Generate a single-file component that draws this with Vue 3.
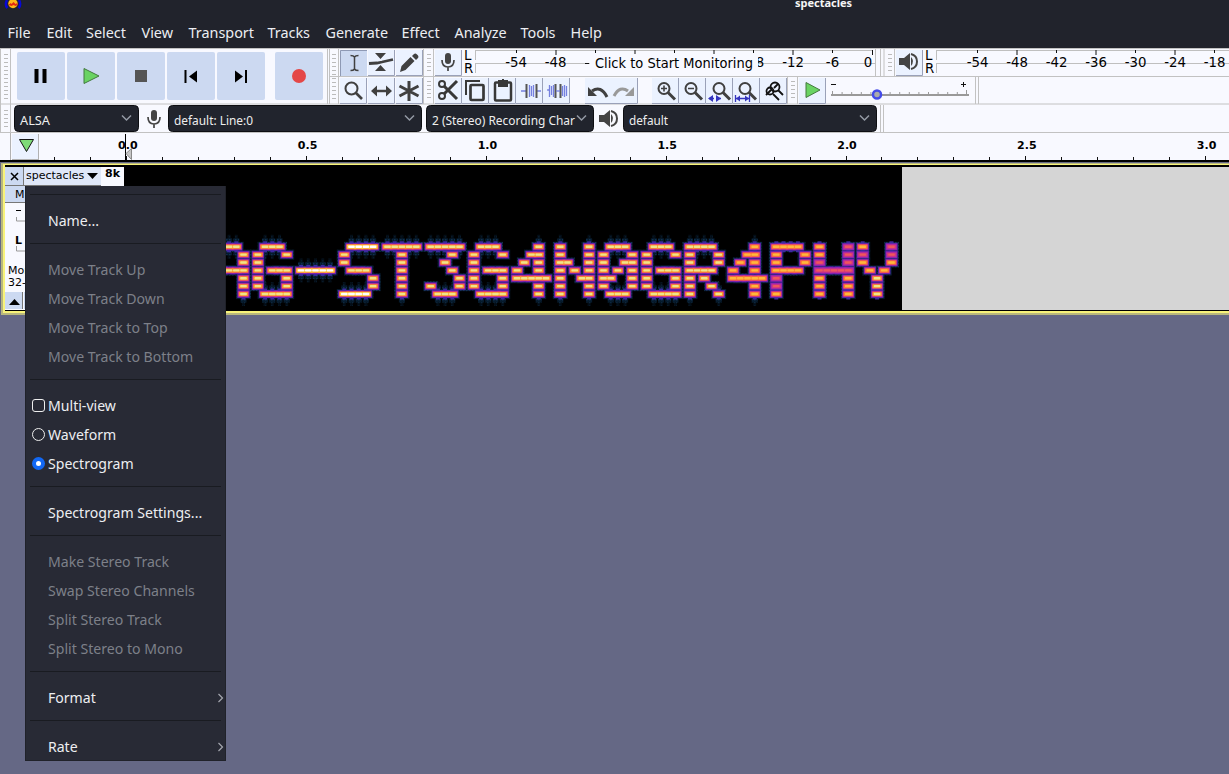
<script setup>
const menus = [['File', 7.5], ['Edit', 46.5], ['Select', 86], ['View', 141.5], ['Transport', 188.5], ['Tracks', 267.5], ['Generate', 325.5], ['Effect', 401.5], ['Analyze', 454.5], ['Tools', 520.5], ['Help', 570.5]]
const glyphs = {
  A: ['.###.', '#...#', '#...#', '#####', '#...#', '#...#', '#...#'],
  G: ['.###.', '#...#', '#....', '#.###', '#...#', '#...#', '.####'],
  '-': ['.....', '.....', '.....', '#####', '.....', '.....', '.....'],
  S: ['.####', '#....', '#....', '.###.', '....#', '....#', '####.'],
  T: ['#####', '..#..', '..#..', '..#..', '..#..', '..#..', '..#..'],
  3: ['#####', '...#.', '..#..', '...#.', '....#', '#...#', '.###.'],
  4: ['...#.', '..##.', '.#.#.', '#..#.', '#####', '...#.', '...#.'],
  N: ['#...#', '#...#', '##..#', '#.#.#', '#..##', '#...#', '#...#'],
  0: ['.###.', '#...#', '#..##', '#.#.#', '##..#', '#...#', '.###.'],
  R: ['####.', '#...#', '#...#', '####.', '#.#..', '#..#.', '#...#'],
  P: ['####.', '#...#', '#...#', '####.', '#....', '#....', '#....'],
  H: ['#...#', '#...#', '#...#', '#####', '#...#', '#...#', '#...#'],
  Y: ['#...#', '#...#', '#...#', '.#.#.', '..#..', '..#..', '..#..']
}
const cells = []
;[...'AG-ST3G4N0GR4PHY'].forEach((ch, k) => {
  glyphs[ch].forEach((row, r) => {
    [...row].forEach((v, c) => {
      if (v !== '#') return
      let tone = 'mid'
      if (ch === '-' || (ch === 'S' && (r === 0 || r === 6))) tone = 'hot'
      else if (k >= 12) tone = 'warm'
      if (k === 13 && (r === 4 || r === 5)) tone = 'cool'
      if (k === 14 && (r === 2 || r === 3 || (c === 4 && r < 2))) tone = 'cool'
      if (k === 15 && ((c === 0 && r === 1) || (c === 4 && r < 2))) tone = 'cool'
      if (k === 15 && r > 3) tone = 'mid'
      cells.push({ x: 214.7 + 43.2 * k + 7.2 * c - 124, y: 246.8 + 7.87 * r - 167, tone, edge: r === 0 || r === 6 || ch === '-', soft: k > 12 })
    })
  })
})
const items = [
  { sep: 1 }, { t: 'Name...' }, { sep: 1 },
  { t: 'Move Track Up', off: 1 }, { t: 'Move Track Down', off: 1 }, { t: 'Move Track to Top', off: 1 }, { t: 'Move Track to Bottom', off: 1 }, { sep: 1 },
  { t: 'Multi-view', mark: 'box' }, { t: 'Waveform', mark: 'radio' }, { t: 'Spectrogram', mark: 'radio on' }, { sep: 1 },
  { t: 'Spectrogram Settings...' }, { sep: 1 },
  { t: 'Make Stereo Track', off: 1 }, { t: 'Swap Stereo Channels', off: 1 }, { t: 'Split Stereo Track', off: 1 }, { t: 'Split Stereo to Mono', off: 1 }, { sep: 1 },
  { t: 'Format', sub: 1 }, { sep: 1 }, { t: 'Rate', sub: 1 }
]
const recTicks = [[516, '-54'], [555.5, '-48'], [760, '8'], [793, '-12'], [832.5, '-6'], [868, '0']]
const playTicks = [-54, -48, -42, -36, -30, -24, -18].map((v, i) => [977.5 + i * 39.5, v])
const rulerTicks = Array.from({ length: 33 }, (_, i) => ({ x: 54.4 + i * 35.96, major: (i - 2) % 5 === 0, label: ((i - 2) / 10).toFixed(1) }))
</script>

<template>
  <div class="app">
    <header class="title">
      <svg class="logo" width="20" height="12"><path d="M4 0Q1.500 5 4.500 8M16 0q2.500 5-.5 8" stroke="#0808d8" stroke-width="2.500" fill="none" /><circle cx="10" cy="3.500" r="4.700" fill="#ffb719" /><path d="M5.500 5l2-2 1 1 2-2 2 2 2-1v2l-2 1-2-1-2 1z" fill="#e22a13" /></svg>
      <span>spectacles</span>
    </header>
    <nav class="menubar">
      <svg width="620" height="32"><text v-for="m in menus" :key="m[0]" :x="m[1]" y="22">{{ m[0] }}</text></svg>
    </nav>

    <svg class="bars" width="1229" height="85" viewBox="0 48 1229 85">
      <rect y="48" width="1229" height="85" fill="#f8f9ff" />
      <g stroke="#c2c2c2" fill="none">
        <path d="M0 48.500H1229M330 76.500H1229M0 104H1229M0 132.500H1229M.5 48V133M10.500 48V133M327.500 48V104M329.500 48V104M338.500 48V104M423.500 48V104M433.500 48V104M875.500 48V77M880.500 48V77M884 48V77M894.500 48V77M787.500 77V104M797.500 77V104M975.500 77V104M978.500 77V104M880.500 105V133M883.500 105V133" />
        <path stroke="#bbb" stroke-width="4" stroke-dasharray="1 3" d="M6 54V100M6 110V129M334 54V100M429 54V74M429 81V101M890 54V74M793 81V101" />
      </g>
      <g fill="#ccd9f1">
        <rect v-for="x in [17, 67, 117, 167, 217, 275]" :key="x" :x="x" y="52" width="48" height="48" rx="2" />
      </g>
      <path d="M34.500 69h4v14h-4zM42.500 69h4v14h-4zM184.500 70h2v13h-2zM197 70.500v12l-8-6zM235 70.500v12l8-6zM245 70h2v13h-2z" />
      <path d="M84 68.500v15l15-7.500z" fill="#69d363" stroke="#43793f" /><path fill="#555" d="M135 70h12v12h-12z" /><circle cx="299" cy="76" r="7" fill="#e44747" />

      <g>
        <template v-for="p in [[340,50],[368,50],[396,50],[340,78],[368,78],[396,78],[435,50],[435,78],[462,78],[489,78],[516,78],[543,78],[585,78],[611,78],[652,78],[679,78],[706,78],[733,78],[760,78],[799,78],[896,50]]" :key="p.join()">
          <rect :x="p[0]" :y="p[1]" width="27" height="26" fill="#ebf2ff" /><path :d="`M${p[0]} ${p[1] + 25.5}h26.5v-25.5`" stroke="#9aa1b8" fill="none" />
        </template>
      </g>
      <path d="M340 50h27v26h-27z" fill="#ccd9f1" /><path d="M340.500 76V50.500H367" fill="none" stroke="#8e99b4" />
      <g fill="none" stroke="#404040" stroke-width="2">
        <path d="M350.500 55.500q3 0 4 1.500q1-1.500 4-1.500M354.500 57v12M350.500 70.500q3 0 4-1.500q1 1.500 4 1.500" stroke-width="1.500" />
        <path d="M369 63.500l8-.5 5-1 11-2.500" stroke-width="2.800" /><path d="M375 53h11l-5.500 6zM375 71h11l-5.500-6z" fill="#404040" stroke="none" />
        <path d="M400 72l1.500-6 9-9 4 4-9 9zM412 56l2-2q1.500-1 3 .5l1 1q1 1.500 0 2.500l-2 2z" fill="#404040" stroke="none" />
        <circle cx="351.500" cy="88.500" r="6" /><path d="M356 93l6 6" stroke-width="2.600" />
        <path d="M373 91h17" stroke-width="2.500" /><path d="M377 85.500v11l-6-5.500zM386 85.500v11l6-5.500z" fill="#404040" stroke="none" />
        <path d="M409 81v20M399.500 86l19 10M399.500 96l19-10" stroke-width="3" />
      </g>
      <defs>
        <g id="mic"><rect x="4" width="6" height="11" rx="3" fill="#444" /><path d="M1 7q0 7 6 7t6-7M7 14v4" stroke="#444" stroke-width="1.700" fill="none" /></g>
        <g id="speaker"><path d="M0 5h5l6-5v17l-6-5H0z" fill="#444" /><path d="M12 4q4 4 0 9z" fill="#444" /><path d="M12 1q6 1.500 6 7.500t-6 7.500" fill="none" stroke="#444" stroke-width="2" /></g>
        <g id="lens"><circle cx="6" cy="6" r="5.500" fill="none" stroke="#404040" stroke-width="2" /><path d="M10 10l7 7" stroke="#404040" stroke-width="3" /></g>
      </defs>
      <use href="#mic" x="441" y="53" /><use href="#mic" x="147" y="110" /><use href="#speaker" x="899" y="53" /><use href="#speaker" x="599" y="110" />
      <g stroke="#383838" fill="none" stroke-width="2"><circle cx="442" cy="84" r="3" /><circle cx="442" cy="96" r="3" /><path d="M444 86l13 13M444 94l13-13" stroke-width="3" /><path d="M466 95V81h14" /><rect x="470.500" y="85" width="13" height="15" rx="1" stroke-width="2.700" /><rect x="495" y="82.500" width="16" height="18" rx="1" stroke-width="2.500" /><path d="M499 81h8v5h-8z" fill="#383838" /><path d="M503 79v3" /></g>
      <g fill="none" stroke="#7580df" stroke-width="1.300"><path d="M521 91h5M536 91h5M548 91v-2M549.500 85v12M551.500 86v9M553.500 85v12M562.500 86v10M564.500 85v12M566.500 86v10M529.500 85v12M531.500 86v10M533.500 85v12" /><path d="M526.500 84v14M536.500 84v14M555.500 84v14M560.500 84v14" stroke="#555" stroke-width="2" /><path d="M556 91h4" /></g>
      <g stroke-width="3" fill="none"><path d="M592 91q9-6 15 6" stroke="#404040" /><path d="M588 87v9h9z" fill="#404040" /><path d="M628 91q-8-6-14 5" stroke="#999" /><path d="M634 87v9h-9z" fill="#999" /></g>
      <use v-for="x in [658, 685, 713, 739]" :key="x" href="#lens" :x="x" y="82.500" />
      <path d="M661 88.500h6M664 85.500v6M688 88.500h6" stroke="#404040" stroke-width="1.600" />
      <path d="M709 98.500h5M716 98.500h5M735 98.500h15M735.500 95v7M749.500 95v7" stroke="#3434be" stroke-width="1.300" /><path d="M713 95v7l-5-3.500zM716 95v7l5-3.500zM740 95.500v6l-4-3zM745 95.500v6l4-3z" fill="#3434be" />
      <g fill="none" stroke="#111" stroke-width="1.800"><circle cx="775" cy="87" r="4.500" /><path d="M778 90l5 5M771 90l-5 5M774 88l4-4" /><circle cx="770" cy="91" r="3.500" /><path d="M773 94l6 6" /></g>
      <path d="M806 82.500v15l14-7.500z" fill="#69d363" stroke="#43793f" />
      <path d="M831 95H969" stroke="#999" stroke-width="2" /><path d="M832.500 91v4M966.500 90v4" stroke="#999" /><path v-for="i in 13" :key="i" :d="`M${832.500 + i * 9.6} 92v3`" stroke="#999" />
      <path d="M831 84.500h5M961 84.500h5M963.500 82v5" stroke="#111" /><circle cx="877" cy="94.500" r="4" fill="#aaa" stroke="#444be8" stroke-width="2.500" />
      <g class="meter">
        <path d="M475.500 50v10M475.500 64v9M475 63.500H876M875.500 50v10M936.500 50v10M936.500 64v9M936 63.500H1229" fill="none" stroke="#bfbfbf" /><path d="M475 50.500H872M936 50.500H1229" stroke="#bfbfbf" />
        <path v-for="i in 9" :key="i" :d="`M${477 + i * 39.5} 50v${i % 2 ? 3 : 5}`" stroke="#111" />
        <path v-for="(p, i) in playTicks" :key="p[1]" :d="`M${p[0]} 50v${i % 2 ? 5 : 3}`" stroke="#111" />
        <text x="464" y="60">L</text><text x="464" y="73">R</text><text x="925" y="60">L</text><text x="925" y="73">R</text>
        <text v-for="p in recTicks" :key="p[1]" :x="p[0]" y="67" text-anchor="middle">{{ p[1] }}</text>
        <text v-for="p in playTicks" :key="p[1]" :x="p[0]" y="67" text-anchor="middle">{{ p[1] }}</text>
        <path fill="#f8f9ff" d="M590 54h168v18H590z" /><path d="M585 63.500h4" stroke="#111" /><path d="M872.500 50v5" stroke="#111" />
        <text x="595" y="68" textLength="158" lengthAdjust="spacingAndGlyphs">Click to Start Monitoring</text>
      </g>
      <g class="combo">
        <template v-for="c in [[14,125,'ALSA',20,30],[168,254,'default: Line:0',174,79],[426,168,'2 (Stereo) Recording Char',432,143],[623,254,'default',629,39]]" :key="c[0]">
          <rect :x="c[0] + .5" y="105.500" :width="c[1] - 1" height="26" rx="4" fill="#21242d" stroke="#0d0e12" />
          <text :x="c[3]" y="125" :textLength="c[4]" lengthAdjust="spacingAndGlyphs">{{ c[2] }}</text><path :d="`M${c[0] + c[1] - 17} 115.500l4.500 4.500 4.500-4.500`" fill="none" stroke="#949aa5" stroke-width="1.500" />
        </template>
      </g>
    </svg>

    <svg class="ruler" width="1229" height="33" viewBox="0 133 1229 33">
      <path fill="#f8f9ff" d="M0 133h1229v27H0z" /><path d="M12 134h27v25H12z" fill="#ebf2ff" /><path d="M10.500 133v27M38.500 134v25M12 159.500h27" stroke="#b2b2b2" /><path d="M19.500 139.500h14l-7 12z" fill="#7edb77" stroke="#151515" />
      <path v-for="t in rulerTicks" :key="t.x" :d="`M${Math.round(t.x) + .5} ${t.major ? 156 : 157}v4`" stroke="#111" />
      <template v-for="t in rulerTicks" :key="t.label"><text v-if="t.major" :x="t.x + 1.500" y="149" text-anchor="middle">{{ t.label }}</text></template>
      <path d="M125.500 134v26" stroke="#000" /><path d="M126 153.500l5.500-5v11z" fill="#c5c5c5" stroke="#888" />
      <path fill="#000" d="M0 160h1229v2H0z" /><path fill="#656885" d="M0 162h1229v4H0z" /><path fill="#b9b87e" d="M1 163h1228v3H1z" />
    </svg>

    <section class="track">
      <div class="panel">
        <div class="head"><svg class="x" width="18" height="18"><path d="M6 6l7 7M13 6l-7 7" stroke="#000" stroke-width="1.500" /></svg><span>spectacles</span><svg width="12" height="8"><path d="M0 1h11L5.500 7z" /></svg></div>
        <svg width="96" height="125" viewBox="5 185 96 125">
          <path fill="#ccd9f1" d="M5 186h97v16H5zM5 292h17v17H5z" /><path fill="#ccd9f1" d="M24 292h78v17H24z" /><path d="M5 185.500h97M5 202.500h97M52.500 185v17M22.500 292v17" stroke="#777" />
          <text x="15" y="198">Mute</text><path d="M16 210.500h5" stroke="#000" /><path d="M16.500 217v4H30M16.500 246v5H30" stroke="#999" fill="none" />
          <text x="15" y="244" font-weight="bold">L</text><text x="8" y="274">Mono,</text><text x="8" y="286">32-bit float</text><path d="M9 305l5.500-6 5.500 6z" />
        </svg>
      </div>
      <div class="scale">8k</div>
      <svg class="spectrum" width="778" height="143" viewBox="0 0 778 143">
        <defs><pattern id="grain" width="3" height="3" patternUnits="userSpaceOnUse"><rect width="3" height="3" fill="#061a2c" /><rect width="1.500" height="1.500" fill="#0f3150" /></pattern></defs>
        <g fill="url(#grain)"><g v-for="(c, i) in cells" :key="i"><rect :x="c.x - 7.5" :y="c.y - 5" width="15" height="10" /><template v-if="c.edge && !c.soft"><rect :x="c.x - 3" :y="c.y - 8.500" width="6" height="17" /><rect :x="c.x - 1.5" :y="c.y - 12" width="3" height="24" opacity=".5" /></template></g></g>
        <g fill="#48249a"><rect v-for="(c, i) in cells" :key="i" :x="c.x - 6.3" :y="c.y - 4" width="12.600" height="8" /></g>
        <g fill="#3c2aa0"><template v-for="(c, i) in cells" :key="i"><rect v-if="c.edge" :x="c.x - 2" :y="c.y - 5.5" width="4" height="11" /></template></g>
        <g fill="#8a22b4"><rect v-for="(c, i) in cells" :key="i" :x="c.x - 5.7" :y="c.y - 3.3" width="11.400" height="6.600" /></g>
        <g><rect v-for="(c, i) in cells" :key="i" :class="'outer ' + c.tone" :x="c.x - 5.2" :y="c.y - 2.7" width="10.400" height="5.400" rx=".8" /></g>
        <g><rect v-for="(c, i) in cells" :key="i" :class="'ring ' + c.tone" :x="c.x - 4.6" :y="c.y - 2" width="9.200" height="4" rx=".7" /></g>
        <g><rect v-for="(c, i) in cells" :key="i" :class="'core ' + c.tone" :x="c.x - 3.3" :y="c.y - 1.2" width="6.600" height="2.400" rx=".8" /></g>
      </svg>
      <div class="rest"></div>
    </section>

    <aside class="menu">
      <template v-for="(m, i) in items" :key="i">
        <div v-if="m.sep" class="sep"></div>
        <div v-else class="item" :class="{ off: m.off }"><i :class="m.mark"></i><span>{{ m.t }}</span><svg v-if="m.sub" width="8" height="10"><path d="M1.500 1l4 4-4 4" fill="none" stroke="#a4a7af" stroke-width="1.200" /></svg></div>
      </template>
    </aside>
  </div>
</template>

<style>
body { margin: 0; overflow: hidden; }
</style>
<style scoped>
.app { width: 1229px; height: 774px; background: #656885; overflow: hidden; position: relative; font-family: "Noto Sans", sans-serif; }
.app svg { display: block; flex: none; }
.title { height: 16px; background: #21232c; position: relative; color: #f5f5f5; font: bold 11px/16px "Noto Sans", sans-serif; }
.title span { position: absolute; left: 795px; top: -5px; }
.logo { position: absolute; left: 3px; top: 0; }
.menubar { height: 32px; background: #21232c; }
.menubar text { fill: #eceef2; font-size: 14.4px; }
.meter text { font: 13.3px "DejaVu Sans", sans-serif; fill: #000; }
.combo text { font: 12.7px "Noto Sans", sans-serif; fill: #eee; }
.ruler text { font: bold 11px "DejaVu Sans", sans-serif; }
.track { box-sizing: border-box; height: 149px; margin-top: -2px; border: 2px solid #f8f37a; border-top-width: 1px; border-right: 0; box-shadow: 0 2px #b9b87e, -2px 0 #b9b87e, -2px 2px #b9b87e; margin-left: 3px; background: #000; display: flex; align-items: flex-start; padding-top: 2px; position: relative; }
.panel { width: 96px; height: 143px; background: #f8f9ff; }
.head { height: 18px; display: flex; align-items: center; background: #dfe7f8; font: 11px/14px "DejaVu Sans", sans-serif; }
.head .x { background: #ccd9f1; border-right: 1px solid #777; margin-right: 2px; }
.head span { width: 61px; white-space: nowrap; margin-top: -1px; }
.panel text { font-family: "DejaVu Sans", sans-serif; font-size: 11px; }
.scale { width: 23px; height: 143px; background: #f8f9ff; text-align: center; font: bold 11px/14px "DejaVu Sans", sans-serif; }
.spectrum { background: #000; }
.rest { flex: 1; height: 143px; background: #d5d5d5; }
.outer { fill: #df3b74; }
.ring { fill: #fb932b; }
.core { fill: #f0e488; }
.outer.hot { fill: #f3683e; }
.ring.hot { fill: #ffc73e; }
.core.hot { fill: #fff; }
.ring.warm { fill: #fb7936; }
.core.warm { fill: #ffb83b; }
.outer.cool { fill: #a826a6; }
.ring.cool { fill: #cf3780; }
.core.cool { fill: #f0565c; }
.menu { position: absolute; left: 25px; top: 186px; width: 199px; height: 574px; border: 1px solid #20222a; border-top: 0; background: #282a35; color: #edeef1; font-size: 14.1px; }
.sep { height: 20px; margin: 0 4px; background: linear-gradient(#191b21, #191b21) 0 8px / 100% 1px no-repeat; }
.item { height: 29px; display: flex; align-items: center; white-space: nowrap; }
.item span { width: 170px; }
.item i { box-sizing: border-box; width: 13px; height: 13px; margin: 0 3px 0 6px; }
.item .box, .item .radio { border: 1px solid #eee; border-radius: 3px; }
.item .radio { border-radius: 50%; }
.item .on { border: 4px solid #1268f4; background: #fff; }
.off { color: #7d8089; }
</style>
